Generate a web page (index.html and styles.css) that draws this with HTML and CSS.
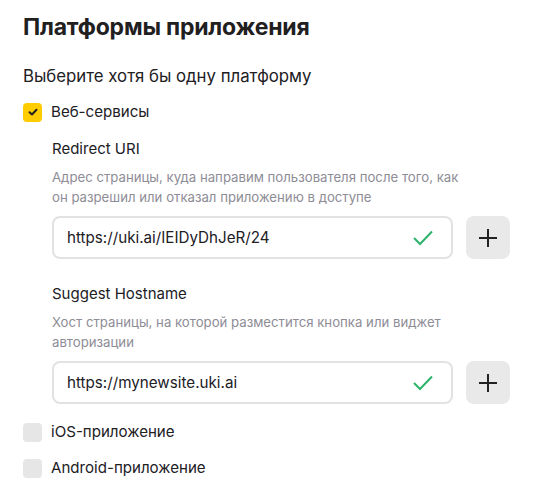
FILE: index.html
```html
<!DOCTYPE html>
<html lang="ru">
<head>
<meta charset="utf-8">
<link rel="stylesheet" href="styles.css">
</head>
<body>
<div class="page">
  <h1 class="title">Платформы приложения</h1>
  <p class="lead">Выберите хотя бы одну платформу</p>

  <label class="check-row check-web">
    <span class="box box-on">
      <svg width="12" height="12" viewBox="0 0 12 12"><path d="M2.5 6.2 L5 8.5 L9.5 3.8" fill="none" stroke="#222" stroke-width="2" stroke-linecap="round" stroke-linejoin="round"/></svg>
    </span>
    <span class="check-label">Веб-сервисы</span>
  </label>

  <div class="sub">
    <div class="field">
      <div class="field-title">Redirect URI</div>
      <div class="field-hint">Адрес страницы, куда направим пользователя после того, как он разрешил или отказал приложению в доступе</div>
      <div class="input-row">
        <div class="input">
          <span class="input-text">https://uki.ai/IEIDyDhJeR/24</span>
          <svg class="ok" width="22" height="18" viewBox="0 0 22 18"><path d="M2 9 L8 15 L20 2.5" fill="none" stroke="#2db36b" stroke-width="2"/></svg>
        </div>
        <button class="add" type="button">
          <svg width="20" height="20" viewBox="0 0 20 20"><path d="M10 1 V19 M1 10 H19" stroke="#222" stroke-width="2"/></svg>
        </button>
      </div>
    </div>

    <div class="field">
      <div class="field-title">Suggest Hostname</div>
      <div class="field-hint">Хост страницы, на которой разместится кнопка или виджет авторизации</div>
      <div class="input-row">
        <div class="input">
          <span class="input-text">https://mynewsite.uki.ai</span>
          <svg class="ok" width="22" height="18" viewBox="0 0 22 18"><path d="M2 9 L8 15 L20 2.5" fill="none" stroke="#2db36b" stroke-width="2"/></svg>
        </div>
        <button class="add" type="button">
          <svg width="20" height="20" viewBox="0 0 20 20"><path d="M10 1 V19 M1 10 H19" stroke="#222" stroke-width="2"/></svg>
        </button>
      </div>
    </div>
  </div>

  <label class="check-row check-ios">
    <span class="box"></span>
    <span class="check-label">iOS-приложение</span>
  </label>
  <label class="check-row check-android">
    <span class="box"></span>
    <span class="check-label">Android-приложение</span>
  </label>
</div>
</body>
</html>
```

FILE: styles.css
```css
* { box-sizing: border-box; }
html, body { margin: 0; padding: 0; background: #fff; }
body {
  font-family: Inter, "Noto Sans", "Liberation Sans", sans-serif;
  color: #21201f;
}
.page {
  padding: 12px 0 0 23px;
  width: 544px;
}
.title {
  margin: 0;
  font-size: 23px;
  line-height: 30px;
  font-weight: 700;
  letter-spacing: -0.2px;
}
.lead {
  margin: 24px 0 0;
  font-size: 16.8px;
  line-height: 20px;
}
.check-row {
  display: flex;
  align-items: center;
  gap: 9px;
  height: 20px;
}
.check-web { margin-top: 16px; }
.box {
  width: 19px;
  height: 19px;
  border-radius: 4px;
  background: #e6e6e6;
  display: flex;
  align-items: center;
  justify-content: center;
  flex: none;
}
.box-on { background: #fc0; }
.check-label {
  font-size: 15.1px;
  line-height: 20px;
}
.sub {
  padding-left: 29px;
  margin-top: 17px;
}
.field { margin-bottom: 25px; }
.field:last-child { margin-bottom: 18px; }
.field-title {
  font-size: 15px;
  line-height: 20px;
}
.field-hint {
  margin-top: 8px;
  font-size: 13.2px;
  line-height: 20px;
  color: #8e8c96;
  width: 420px;
}
.input-row {
  display: flex;
  gap: 13px;
  margin-top: 9px;
}
.input {
  width: 401px;
  height: 43px;
  border: 2px solid #e2e2e2;
  border-radius: 8px;
  display: flex;
  align-items: center;
  justify-content: space-between;
  padding: 0 17px 0 13px;
}
.input-text {
  font-size: 15.2px;
  color: #21201f;
}
.ok { display: block; }
.add {
  width: 44px;
  height: 43px;
  border: none;
  border-radius: 8px;
  background: #e9e9e9;
  display: flex;
  align-items: center;
  justify-content: center;
  padding: 0;
}
.check-android { margin-top: 16px; }
```
